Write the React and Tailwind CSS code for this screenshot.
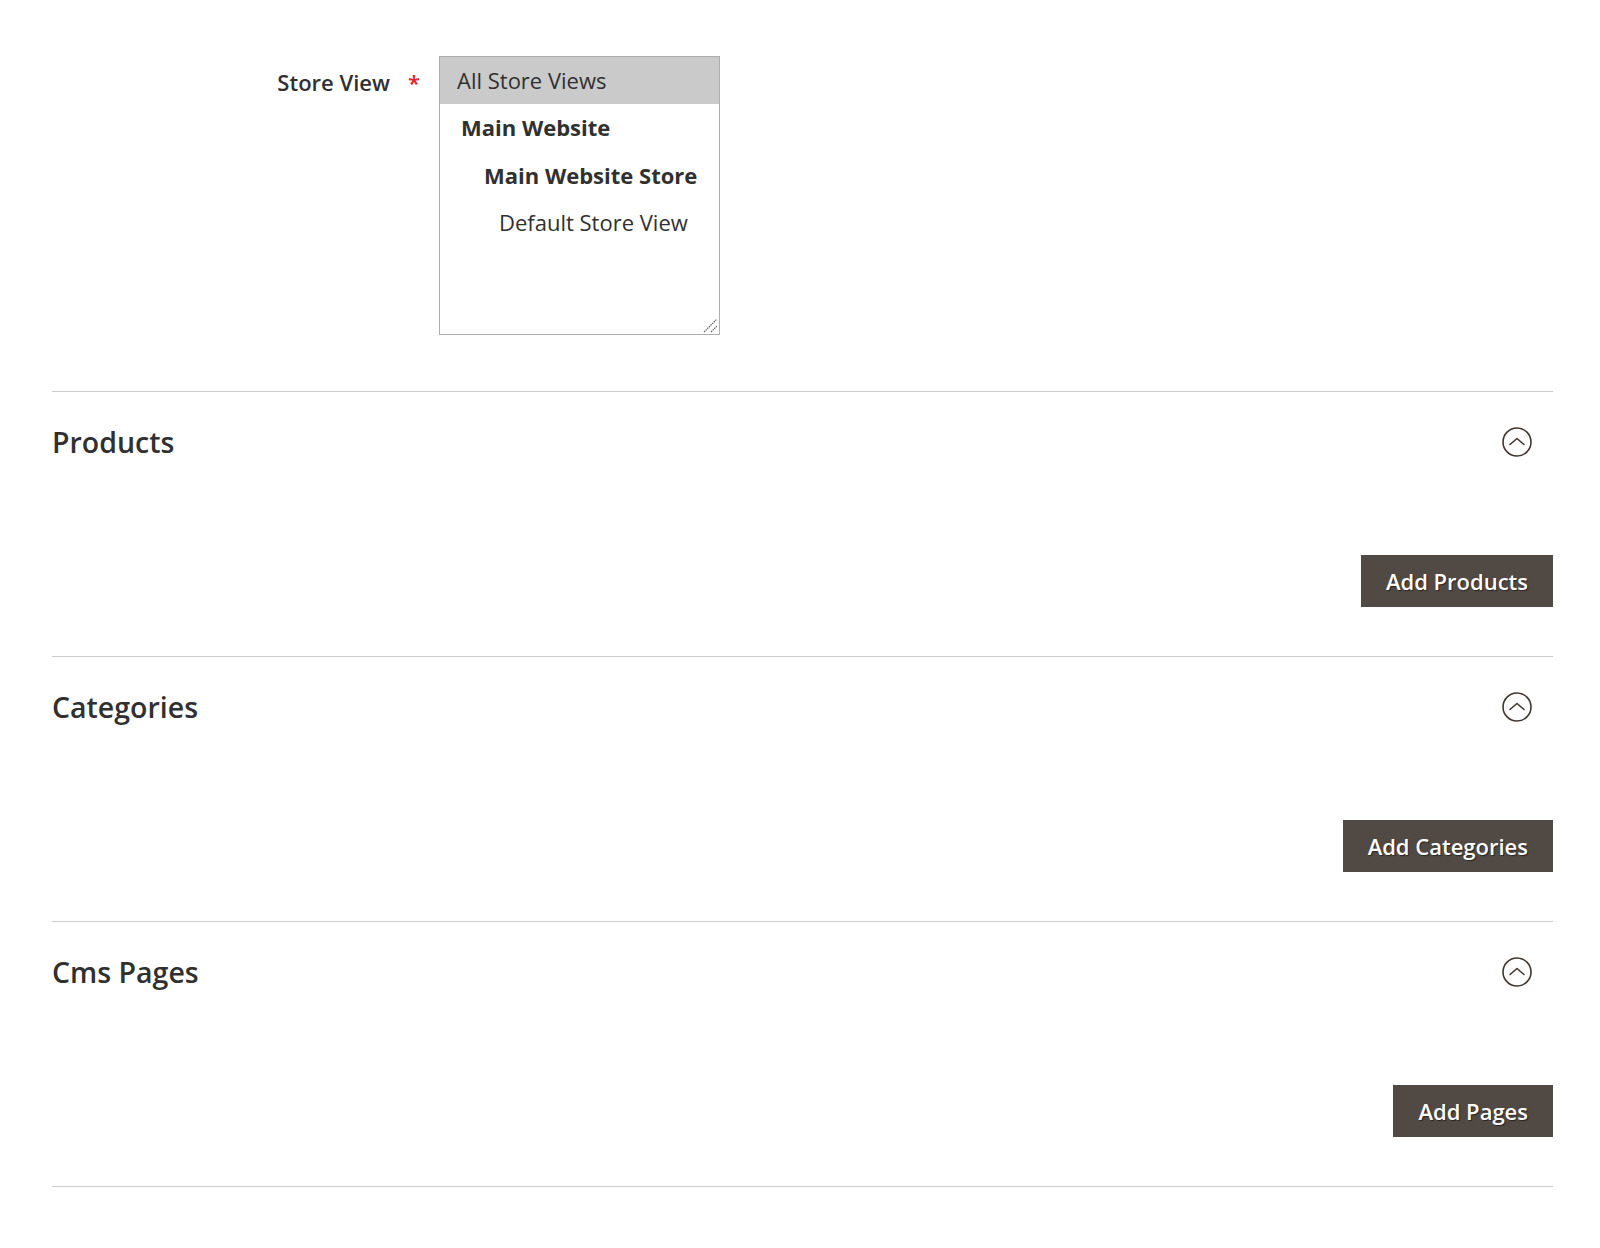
import React from "react";

const font = { fontFamily: '"Open Sans", "Noto Sans", sans-serif' };

const options = [
  { label: "All Store Views", pad: "pl-[17px]", bold: false, selected: true, h: "h-[47px]" },
  { label: "Main Website", pad: "pl-[21px]", bold: true, h: "h-[47px]" },
  { label: "Main Website Store", pad: "pl-[44px]", bold: true, h: "h-[48px]" },
  { label: "Default Store View", pad: "pl-[59px]", bold: false, h: "h-[47px]" },
];

const sections = [
  { title: "Products", button: "Add Products" },
  { title: "Categories", button: "Add Categories" },
  { title: "Cms Pages", button: "Add Pages" },
];

const CollapseIcon = () => (
  <svg width="30" height="30" viewBox="0 0 30 30" fill="none" stroke="#41362f" strokeWidth="1.6">
    <circle cx="15" cy="15" r="14" />
    <polyline points="8,17.5 15,11.5 22,17.5" strokeLinecap="round" strokeLinejoin="round" />
  </svg>
);

const App = () => {
  return (
    <div className="bg-white min-h-[1248px] w-full pl-[52px] pr-[47px] pt-[56px] text-[#303030]" style={font}>
      {/* Store View field */}
      <div className="flex items-start">
        <div className="w-[368px] mr-[19px] mt-[10px] flex justify-end items-center text-[22px] leading-[32px]">
          <span className="font-semibold">Store View</span>
          <span className="ml-[18px] text-[#e22626] font-semibold">*</span>
        </div>
        <div className="relative w-[281px] h-[279px] border border-[#adadad] bg-white">
          {options.map((opt) => (
            <div
              key={opt.label}
              className={`${opt.h} ${opt.pad} flex items-center text-[22px] ${opt.bold ? "font-bold" : ""} ${opt.selected ? "bg-[#cacaca]" : ""}`}
            >
              {opt.label}
            </div>
          ))}
          {/* resize grip */}
          <svg className="absolute right-[1px] bottom-[1px]" width="16" height="16" viewBox="0 0 16 16" stroke="#555" strokeWidth="1.1" strokeDasharray="1.5 0.8">
            <line x1="2" y1="15" x2="15" y2="2" />
            <line x1="9" y1="15" x2="15" y2="9" />
          </svg>
        </div>
      </div>

      {/* Collapsible sections */}
      <div className="mt-[56px]">
        {sections.map((s, idx) => (
          <div key={s.title} className={`border-t border-[#cccccc] ${idx === sections.length - 1 ? "border-b" : ""}`}>
            <div className="h-[100px] flex items-center justify-between">
              <h2 className="text-[28.5px] font-semibold text-[#303030]">{s.title}</h2>
              <div className="mr-[21px] flex items-center">
                <CollapseIcon />
              </div>
            </div>
            <div className="flex justify-end pt-[63px] pb-[49px]">
              <button
                className="h-[52px] px-[25px] bg-[#514943] text-white text-[22px] font-semibold"
                style={{ textShadow: "1px 1px 1px rgba(0,0,0,0.5)" }}
              >
                {s.button}
              </button>
            </div>
          </div>
        ))}
      </div>
    </div>
  );
};

export default App;
